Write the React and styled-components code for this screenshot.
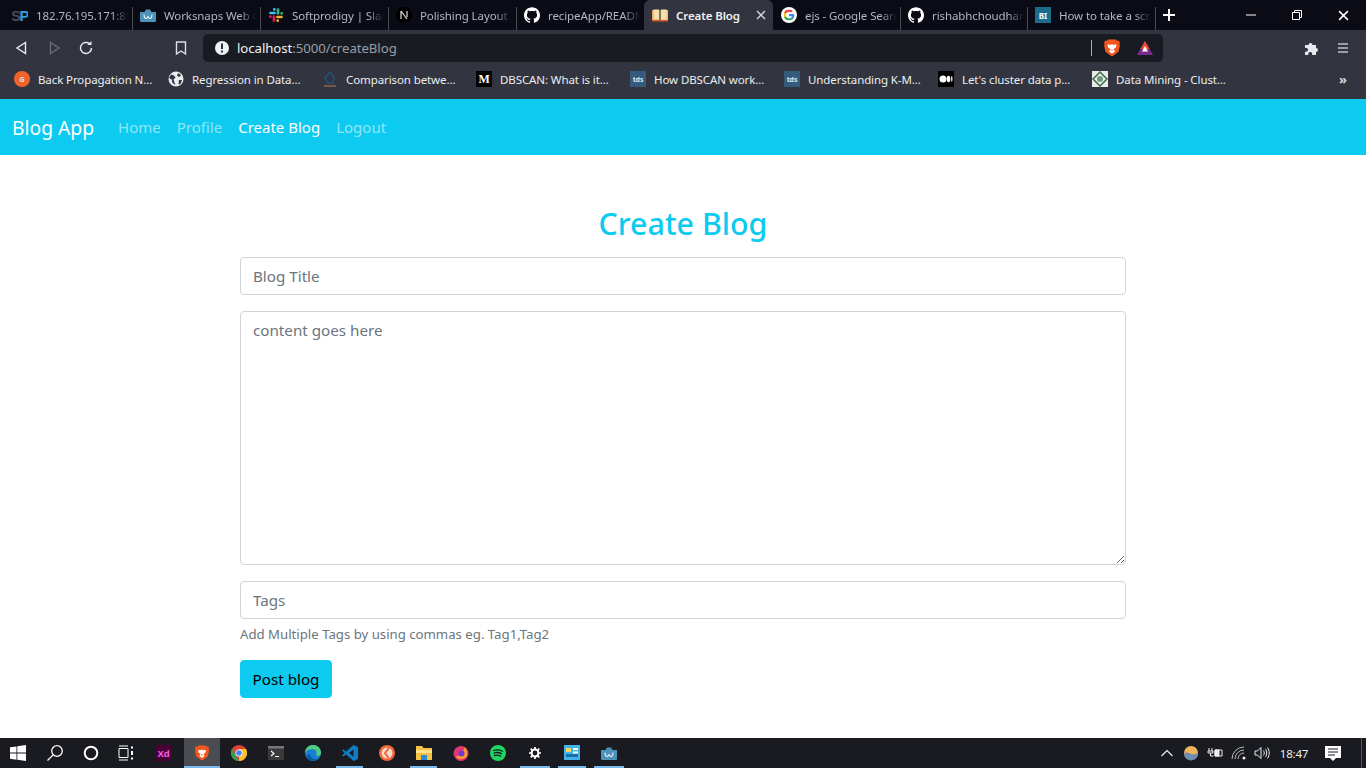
import React from 'react';
import styled, { createGlobalStyle } from 'styled-components';
import { SiGithub } from 'react-icons/si';

const Global = createGlobalStyle`
  html, body { margin: 0; padding: 0; height: 100%; background: #fff; overflow: hidden; }
  body { font-family: "Noto Sans", "Open Sans", "Liberation Sans", sans-serif; }
  * { box-sizing: border-box; }
`;
const Page = styled.div`display:flex;flex-direction:column;height:768px;width:1366px;overflow:hidden;`;
const TabStrip = styled.div`height:30px;background:#0b0b15;display:flex;align-items:stretch;padding-left:4px;flex:none;`;
const Tab = styled.div`
  width:${p => p.$w || 128}px;flex:none;display:flex;align-items:center;padding-left:8px;gap:8px;position:relative;
  background:${p => p.$active ? '#32353f' : 'transparent'};
  border-radius:${p => p.$active ? '6px 6px 0 0' : '0'};
  color:${p => p.$active ? '#f0f1f3' : '#b4b7bf'};
  font-size:11.5px;font-weight:${p => p.$active ? 600 : 400};
  &::after{content:"";display:${p => p.$sep ? 'block' : 'none'};position:absolute;right:-1px;top:7px;bottom:0;width:1px;background:#4a4c55;}
`;
const TabIcon = styled.span`width:16px;height:16px;flex:none;display:flex;align-items:center;justify-content:center;color:#fff;`;
const TabText = styled.span`
  width:${p => p.$w || 92}px;overflow:hidden;white-space:nowrap;flex:none;letter-spacing:-.1px;
  ${p => p.$fade ? 'mask-image:linear-gradient(to right,#000 82%,transparent);' : ''}
`;
const TabClose = styled.span`position:absolute;right:7px;top:10px;width:10px;height:10px;display:flex;`;
const NewTab = styled.div`width:28px;display:flex;align-items:center;justify-content:center;flex:none;`;
const WinControls = styled.div`margin-left:auto;display:flex;align-items:center;`;
const WinBtn = styled.div`width:46px;height:30px;display:flex;align-items:center;justify-content:center;`;

const Toolbar = styled.div`height:36px;background:#32353f;display:flex;align-items:center;padding-left:14px;flex:none;`;
const NavIcon = styled.span`width:16px;height:16px;display:flex;margin-right:16px;flex:none;`;
const BookIcon = styled.span`width:16px;height:16px;display:flex;margin:0 14px 0 63px;flex:none;`;
const Omni = styled.div`width:960px;height:28px;border-radius:5px;background:#191b23;display:flex;align-items:center;padding-left:11px;flex:none;`;
const UrlText = styled.span`margin-left:7px;font-size:13.2px;color:#9a9da6;letter-spacing:-.05px;`;
const UrlHost = styled.span`color:#f1f2f4;`;
const OmniEnd = styled.div`margin-left:auto;display:flex;align-items:center;height:100%;padding-right:9px;`;
const OmniSep = styled.span`width:1px;height:16px;background:#aaa;margin-right:11px;`;
const ExtIcon = styled.span`width:18px;height:18px;display:flex;margin-left:${p => p.$ml || 0}px;`;
const ToolEnd = styled.div`display:flex;align-items:center;margin-left:141px;gap:17px;`;

const Bookmarks = styled.div`height:33px;background:#32353f;display:flex;align-items:center;padding:0 0 7px 14px;flex:none;position:relative;`;
const Bookmark = styled.div`width:154px;flex:none;display:flex;align-items:center;gap:8px;font-size:11.5px;color:#eceef1;white-space:nowrap;letter-spacing:-.1px;`;
const BmIcon = styled.span`width:16px;height:16px;flex:none;display:flex;align-items:center;justify-content:center;font-size:7px;font-weight:700;color:#dfe5ea;border-radius:${p => p.$round ? '50%' : '0'};background:${p => p.$bg || 'transparent'};`;
const More = styled.span`position:absolute;right:19px;top:5px;color:#d5d7db;font-size:13px;font-weight:700;line-height:16px;`;

const Navbar = styled.nav`height:56px;background:#0dcaf0;display:flex;align-items:center;padding:0 12px;flex:none;`;
const Brand = styled.a`font-size:19.3px;color:#fff;margin-right:16px;`;
const NavLink = styled.a`font-size:15px;padding:0 8px;color:${p => p.$active ? '#fff' : 'rgba(255,255,255,.55)'};`;

const Main = styled.main`flex:1;display:flex;flex-direction:column;align-items:center;padding-top:48px;background:#fff;`;
const Form = styled.form`width:886px;display:flex;flex-direction:column;`;
const Title = styled.h1`margin:0 0 12px;font-size:30.4px;line-height:42px;font-weight:500;color:#0dcaf0;text-align:center;`;
const Field = styled.input`
  height:38px;width:100%;border:1px solid #ced4da;border-radius:4px;padding:0 12px;font:inherit;font-size:15.2px;margin-bottom:${p => p.$mb}px;outline:none;
  &::placeholder{color:#6c757d;opacity:1;}
`;
const Area = styled.textarea`
  height:254px;width:100%;border:1px solid #ced4da;border-radius:4px;padding:6px 12px;font:inherit;font-size:15.2px;line-height:24px;margin-bottom:16px;resize:vertical;outline:none;display:block;
  &::placeholder{color:#6c757d;opacity:1;}
`;
const Help = styled.div`font-size:13.2px;line-height:21px;color:#6c757d;margin:5px 0 15px;`;
const Post = styled.button`align-self:flex-start;width:92px;height:38px;border:1px solid #0dcaf0;border-radius:4px;background:#0dcaf0;color:#000;font:inherit;font-size:15.2px;padding:0;`;

const Taskbar = styled.div`height:30px;background:#191b21;display:flex;align-items:center;flex:none;position:relative;`;
const TaskCell = styled.div`
  width:${p => p.$w || 36}px;height:30px;flex:none;display:flex;align-items:center;justify-content:center;position:relative;
  background:${p => p.$active ? '#4a4c52' : 'transparent'};
  &::after{content:"";display:${p => p.$open ? 'block' : 'none'};position:absolute;left:${p => p.$active ? 0 : '4px'};right:${p => p.$active ? 0 : '4px'};bottom:0;height:2px;background:#76b9ed;}
`;
const Tray = styled.div`margin-left:auto;display:flex;align-items:center;height:100%;`;
const TrayItem = styled.span`width:${p => p.$w || 24}px;display:flex;align-items:center;justify-content:center;flex:none;`;
const Clock = styled.span`font-size:11.5px;color:#eee;width:42px;text-align:center;flex:none;letter-spacing:-.2px;`;
const Peek = styled.span`width:1px;height:30px;background:#555;margin-left:10px;margin-right:4px;`;

const W = ({ s = 16 }) => (
  <svg width={s} height={s} viewBox="0 0 16 16"><path d="M0 5h4.500L6 2.500h4L11.500 5H16v9a1 1 0 0 1-1 1H1a1 1 0 0 1-1-1z" fill="#4b93b8"/><path d="M4 7.500c0 5 3.600 5 4 1.500.4 3.500 4 3.500 4-1.500" fill="none" stroke="#e8f2f7" strokeWidth="1.100"/></svg>
);
const SP = () => (<svg width="16" height="16" viewBox="0 0 16 16"><text x="-1" y="14" fontFamily="Liberation Sans" fontWeight="700" fontSize="15" fill="#4a4c52">S</text><text x="7.500" y="14" fontFamily="Liberation Sans" fontWeight="700" fontSize="15" fill="#2d9fdc">P</text></svg>);
const Notion = () => (<svg width="16" height="16" viewBox="0 0 16 16"><circle cx="8" cy="8" r="8" fill="#000"/><path d="M5 4v8M5 4l6 8M11 4v6" stroke="#ddd" strokeWidth="1.200" fill="none"/></svg>);
const Slack = () => (
  <svg width="16" height="16" viewBox="0 0 16 16" fill="none" strokeWidth="2.700" strokeLinecap="round">
    <path d="M2.500 6h4M6.300 2.300v.1" stroke="#36c5f0"/>
    <path d="M10 2.500v4M13.700 6.300h-.1" stroke="#2eb67d"/>
    <path d="M13.500 10h-4M9.700 13.700v-.1" stroke="#ecb22e"/>
    <path d="M6 13.500v-4M2.300 9.700h.1" stroke="#e01e5a"/>
  </svg>
);
const Google = () => (
  <svg width="16" height="16" viewBox="0 0 16 16">
    <circle cx="8" cy="8" r="8" fill="#fff"/>
    <svg x="2.500" y="2.500" width="11" height="11" viewBox="0 0 48 48">
      <path fill="#EA4335" d="M24 9.500c3.540 0 6.710 1.220 9.210 3.600l6.850-6.850C35.900 2.380 30.470 0 24 0 14.620 0 6.510 5.380 2.560 13.220l7.980 6.190C12.430 13.720 17.740 9.500 24 9.500z"/>
      <path fill="#4285F4" d="M46.980 24.550c0-1.570-.15-3.090-.38-4.550H24v9.020h12.940c-.58 2.960-2.260 5.480-4.780 7.180l7.730 6c4.510-4.180 7.090-10.360 7.090-17.650z"/>
      <path fill="#FBBC05" d="M10.530 28.590c-.48-1.450-.76-2.990-.76-4.590s.27-3.140.76-4.590l-7.980-6.190C.92 16.460 0 20.120 0 24c0 3.880.92 7.540 2.560 10.780l7.970-6.190z"/>
      <path fill="#34A853" d="M24 48c6.480 0 11.930-2.130 15.890-5.810l-7.730-6c-2.150 1.450-4.920 2.300-8.160 2.300-6.260 0-11.570-4.220-13.470-9.910l-7.980 6.190C6.510 42.620 14.620 48 24 48z"/>
    </svg>
  </svg>
);
const BookFav = () => (<svg width="16" height="16" viewBox="0 0 16 16"><path d="M0 3h7.500v11H0z" fill="#e8a35c"/><path d="M8.500 3H16v11H8.500z" fill="#f0c070"/><path d="M1.500 2.500h5.500v10H1.500zM9 2.500h5.500v10H9z" fill="#f3dfb0"/><path d="M0 13h16v1.500H0z" fill="#d9562b"/></svg>);
const Close = ({ s = 10, c = '#d8dade' }) => (<svg width={s} height={s} viewBox="0 0 10 10"><path d="M1 1l8 8M9 1l-8 8" stroke={c} strokeWidth="1.400"/></svg>);
const Brave = ({ s = 16 }) => (<svg width={s} height={s} viewBox="0 0 16 18"><path d="M4 .5h8l1 1.300 1.500-.3L16 3.500l-.6 1.800.5 1.500-1.400 6L9.500 16.500 8 17.500l-1.500-1L1.500 12.800.1 6.800l.5-1.500L0 3.500 1.500 1.500 3 1.800z" fill="#f1561f"/><path d="M3.500 5.500L6.500 5.800 8 5.200l1.500.6 3-.3-.8 3.300-2.200 1.200L11 12.500 8 14.500 5 12.500l1.500-2.500-2.200-1.200z" fill="#fff"/><path d="M6.700 10.800h2.600L8 12z" fill="#f1561f"/></svg>);
const BAT = () => (<svg width="18" height="18" viewBox="0 0 18 18"><path d="M9 2l8 14H1z" fill="#7b2a8f"/><path d="M9 2l4.500 8h-9z" fill="#ef4b2c"/><path d="M9 7l3 5.500H6z" fill="#fff"/></svg>);
const Globe = () => (<svg width="16" height="16" viewBox="0 0 16 16"><circle cx="8" cy="8" r="7.500" fill="#e9ebee"/><path d="M3 3.500l3 1 1.500 2-2 2 1 3 1 2.500-3-2-.8-3.500L1 7zM10 2l3 2-1.500 2L9 5zM11 9l3 0-1.500 4-2 .5z" fill="#32353f"/></svg>);

const tabs = [
  { i: <SP />, t: '182.76.195.171:8080' },
  { i: <W />, t: 'Worksnaps Web Client' },
  { i: <Slack />, t: 'Softprodigy | Slack' },
  { i: <Notion />, t: 'Polishing Layout - Notion' },
  { i: <SiGithub size={16} />, t: 'recipeApp/README.md' },
];
const tabsAfter = [
  { i: <Google />, t: 'ejs - Google Search', w: 127 },
  { i: <SiGithub size={16} />, t: 'rishabhchoudhary', w: 127 },
  { i: <BmIcon $bg="#1d6b8a" style={{ color: '#fff', fontSize: 8 }}>BI</BmIcon>, t: 'How to take a screenshot', w: 128 },
];

const marks = [
  { i: <BmIcon $round $bg="#f0642a">G</BmIcon>, t: 'Back Propagation N...' },
  { i: <Globe />, t: 'Regression in Data...' },
  { i: <svg width="16" height="16" viewBox="0 0 16 16"><path d="M8 1L3 7l3 5h5l1-6zM2 15h12" fill="none" stroke="#27507a" strokeWidth="1.500"/><path d="M2 15h12" stroke="#c9682b" strokeWidth="1"/></svg>, t: 'Comparison betwe...' },
  { i: <BmIcon $bg="#000" style={{ color: '#fff', fontSize: 12, fontFamily: 'Liberation Serif' }}>M</BmIcon>, t: 'DBSCAN: What is it...' },
  { i: <BmIcon $bg="#355a7c">tds</BmIcon>, t: 'How DBSCAN work...' },
  { i: <BmIcon $bg="#355a7c">tds</BmIcon>, t: 'Understanding K-M...' },
  { i: <BmIcon $bg="#000"><svg width="14" height="8" viewBox="0 0 14 8"><circle cx="4" cy="4" r="3.500" fill="#fff"/><ellipse cx="9.500" cy="4" rx="1.800" ry="3.300" fill="#fff"/><ellipse cx="12.800" cy="4" rx=".7" ry="3" fill="#fff"/></svg></BmIcon>, t: "Let's cluster data p..." },
  { i: <svg width="16" height="16" viewBox="0 0 16 16"><path d="M0 0h16v16H0z" fill="#e8ece6"/><path d="M8 1l7 7-7 7-7-7z" fill="none" stroke="#3e6a4f" strokeWidth="1.500"/><circle cx="8" cy="8" r="3" fill="#6f9a7a"/></svg>, t: 'Data Mining - Clust...' },
];

const Win = () => (<svg width="16" height="16" viewBox="0 0 16 16" fill="#fff"><path d="M0 2.300l6.500-.9v6.200H0zM7.300 1.300L16 0v7.600H7.300zM0 8.400h6.500v6.300L0 13.800zM7.300 8.400H16V16l-8.700-1.200z"/></svg>);
const Search = () => (<svg width="18" height="18" viewBox="0 0 18 18" fill="none" stroke="#fff" strokeWidth="1.300"><circle cx="11" cy="7" r="5.300"/><path d="M7 11l-5.500 5.500"/></svg>);
const Cortana = () => (<svg width="16" height="16" viewBox="0 0 16 16"><circle cx="8" cy="8" r="6.300" fill="none" stroke="#fff" strokeWidth="2"/></svg>);
const TaskView = () => (<svg width="16" height="16" viewBox="0 0 16 16" fill="none" stroke="#fff" strokeWidth="1"><path d="M1 3.500h9v9H1zM1 1h9M1 15h9"/><path d="M13 1.500h2v2h-2zM13 6h2v4h-2zM13 12.500h2v2h-2z" fill="#fff" stroke="none"/></svg>);
const Xd = () => (<svg width="16" height="16" viewBox="0 0 16 16"><rect width="16" height="16" fill="#470137"/><text x="1.500" y="12" fontSize="9.500" fontFamily="Liberation Sans" fontWeight="700" fill="#ff61f6">Xd</text></svg>);
const Chrome = () => (<svg width="16" height="16" viewBox="0 0 16 16"><circle cx="8" cy="8" r="8" fill="#dc4437"/><path d="M8 16A8 8 0 0 1 1 4l4 7z" fill="#2ea24f"/><path d="M8 16a8 8 0 0 0 7-12H8z" fill="#fbc02d"/><circle cx="8" cy="8" r="3.600" fill="#fff"/><circle cx="8" cy="8" r="2.800" fill="#4285f4"/></svg>);
const Term = () => (<svg width="16" height="16" viewBox="0 0 16 16"><rect y="1" width="16" height="14" fill="#3a3a3a"/><rect y="1" width="16" height="2.500" fill="#777"/><path d="M3 6l3 2.500L3 11M7 11.500h4" stroke="#fff" strokeWidth="1.100" fill="none"/></svg>);
const Edge = () => (<svg width="16" height="16" viewBox="0 0 16 16"><circle cx="8" cy="8" r="8" fill="#1a7fd0"/><path d="M8 0a8 8 0 0 1 8 8c0 3-4 3.500-5 2C13 7 11 4 7 4 4 4 1 6 0 8a8 8 0 0 1 8-8z" fill="#4fd07a"/><path d="M5 9c0 4 4 6 8 5a8 8 0 0 1-10 0C1 12 2 9 5 9z" fill="#0c59a4"/></svg>);
const VSCode = () => (<svg width="16" height="16" viewBox="0 0 16 16"><path d="M11.500 0L16 2v12l-4.500 2L4 9.500 1.500 11.500 0 10.500 2.700 8 0 5.500l1.500-1L4 6.500z" fill="#0f7cc4"/><path d="M11.500 4.500L7 8l4.500 3.500z" fill="#191b21"/></svg>);
const Orange = () => (<svg width="16" height="16" viewBox="0 0 16 16"><circle cx="8" cy="8" r="8" fill="#f0663a"/><circle cx="8" cy="8" r="5.500" fill="#f7d9cb"/><path d="M10 3L6 8l3.500 5" fill="none" stroke="#f0663a" strokeWidth="2"/></svg>);
const Folder = () => (<svg width="16" height="16" viewBox="0 0 16 16"><path d="M0 1h6l1.500 2H16v12H0z" fill="#f5c343"/><path d="M0 5h16v3H0z" fill="#ffe08a"/><path d="M5 10h6v5H5z" fill="#2b8ad8"/></svg>);
const Firefox = () => (<svg width="16" height="16" viewBox="0 0 16 16"><circle cx="8" cy="8.500" r="7.500" fill="#e3356f"/><path d="M3 12c2 3 8 3 11-1 1-3 0-7-3-9 1 3-1 4-2 5 2 1 1 4-1 4S4 10 3 12z" fill="#ff9a2e"/><circle cx="8.500" cy="8.500" r="3" fill="#6f3bd6"/></svg>);
const Spotify = () => (<svg width="16" height="16" viewBox="0 0 16 16"><circle cx="8" cy="8" r="8" fill="#1ed760"/><path d="M3.500 5.500c3-1 6-.8 9 .8M4 8c2.500-.8 5-.6 7.500.7M4.500 10.500c2-.5 4-.4 6 .6" fill="none" stroke="#191b21" strokeWidth="1.300" strokeLinecap="round"/></svg>);
const Gear = () => (<svg width="12" height="12" viewBox="0 0 14 14"><circle cx="7" cy="7" r="4" fill="none" stroke="#fff" strokeWidth="2.400"/><path d="M7 0v3M7 11v3M0 7h3M11 7h3M2 2l2 2M10 10l2 2M2 12l2-2M10 4l2-2" stroke="#fff" strokeWidth="2"/></svg>);
const Panel = () => (<svg width="16" height="16" viewBox="0 0 16 16"><rect width="16" height="15" fill="#43b4e8"/><rect x="2" y="3" width="5" height="4" fill="#f5d76e"/><rect x="9" y="3" width="5" height="2" fill="#fff"/><rect x="9" y="6.500" width="5" height="2" fill="#fff"/><rect x="2" y="9" width="12" height="3" fill="#176ea8"/></svg>);

const apps = [
  { i: <Xd />, w: 40 },
  { i: <Brave />, w: 36, active: true, open: true },
  { i: <Chrome />, w: 38 },
  { i: <Term />, w: 35 },
  { i: <Edge />, w: 39 },
  { i: <VSCode />, w: 35, open: true },
  { i: <Orange />, w: 39 },
  { i: <Folder />, w: 35, open: true },
  { i: <Firefox />, w: 39 },
  { i: <Spotify />, w: 36 },
  { i: <Gear />, w: 38, open: true },
  { i: <Panel />, w: 36, open: true },
  { i: <W />, w: 38, open: true },
];

export default function App() {
  return (
    <Page>
      <Global />
      <TabStrip>
        {tabs.map((t, k) => (
          <Tab key={k} $sep={k < 4}>
            <TabIcon>{t.i}</TabIcon>
            <TabText $fade>{t.t}</TabText>
          </Tab>
        ))}
        <Tab $active $w={129}>
          <TabIcon><BookFav /></TabIcon>
          <TabText $w={76}>Create Blog</TabText>
          <TabClose><Close /></TabClose>
        </Tab>
        {tabsAfter.map((t, k) => (
          <Tab key={k} $w={t.w} $sep>
            <TabIcon>{t.i}</TabIcon>
            <TabText $fade>{t.t}</TabText>
          </Tab>
        ))}
        <NewTab><svg width="12" height="12" viewBox="0 0 12 12"><path d="M6 0v12M0 6h12" stroke="#fff" strokeWidth="2"/></svg></NewTab>
        <WinControls>
          <WinBtn><svg width="10" height="10" viewBox="0 0 10 10"><path d="M0 5h10" stroke="#fff"/></svg></WinBtn>
          <WinBtn><svg width="10" height="10" viewBox="0 0 10 10" fill="none" stroke="#fff"><path d="M.5 2.500h7v7h-7zM2.500 2.500v-2h7v7h-2"/></svg></WinBtn>
          <WinBtn><Close s={11} c="#fff" /></WinBtn>
        </WinControls>
      </TabStrip>
      <Toolbar>
        <NavIcon><svg width="16" height="16" viewBox="0 0 16 16" fill="none" stroke="#e8e9ec" strokeWidth="1.400"><path d="M11.500 2.500v11L3 8z" /></svg></NavIcon>
        <NavIcon><svg width="16" height="16" viewBox="0 0 16 16" fill="none" stroke="#6a6d76" strokeWidth="1.400"><path d="M4.500 2.500v11L13 8z" /></svg></NavIcon>
        <NavIcon><svg width="16" height="16" viewBox="0 0 16 16" fill="none" stroke="#e8e9ec" strokeWidth="1.500"><path d="M13.500 8a5.500 5.500 0 1 1-2-4.300"/><path d="M13.500 1v4h-4z" fill="#e8e9ec" stroke="none"/></svg></NavIcon>
        <BookIcon><svg width="16" height="16" viewBox="0 0 16 16" fill="none" stroke="#dfe0e4" strokeWidth="1.400"><path d="M3.500 2h9v12L8 11l-4.500 3z"/></svg></BookIcon>
        <Omni>
          <svg width="16" height="16" viewBox="0 0 16 16"><circle cx="8" cy="8" r="7" fill="#f1f2f4"/><path d="M8 3.500v5.500M8 10.500v2" stroke="#191b23" strokeWidth="1.800"/></svg>
          <UrlText><UrlHost>localhost</UrlHost>:5000/createBlog</UrlText>
          <OmniEnd>
            <OmniSep />
            <ExtIcon><Brave s={18} /></ExtIcon>
            <ExtIcon $ml={15}><BAT /></ExtIcon>
          </OmniEnd>
        </Omni>
        <ToolEnd>
          <svg width="16" height="16" viewBox="0 0 16 16" fill="#e8e9ec"><path d="M1 5h3.500a2 2 0 1 1 4 0H12v3a2 2 0 1 1 0 4v3H8a2 2 0 1 0-3.500 0H1v-3.500a2 2 0 1 0 0-3.500z"/></svg>
          <svg width="12" height="14" viewBox="0 0 12 14" fill="#9a9da6"><path d="M1 2h10v2H1zM1 6h10v2H1zM1 10h10v2H1z"/></svg>
        </ToolEnd>
      </Toolbar>
      <Bookmarks>
        {marks.map((m, k) => (
          <Bookmark key={k}>{m.i}<span>{m.t}</span></Bookmark>
        ))}
        <More>»</More>
      </Bookmarks>
      <Navbar>
        <Brand>Blog App</Brand>
        <NavLink>Home</NavLink>
        <NavLink>Profile</NavLink>
        <NavLink $active>Create Blog</NavLink>
        <NavLink>Logout</NavLink>
      </Navbar>
      <Main>
        <Form>
          <Title>Create Blog</Title>
          <Field $mb={16} placeholder="Blog Title" />
          <Area placeholder="content goes here" />
          <Field $mb={0} placeholder="Tags" />
          <Help>Add Multiple Tags by using commas eg. Tag1,Tag2</Help>
          <Post type="button">Post blog</Post>
        </Form>
      </Main>
      <Taskbar>
        <TaskCell $w={36}><Win /></TaskCell>
        <TaskCell $w={38}><Search /></TaskCell>
        <TaskCell $w={34}><Cortana /></TaskCell>
        <TaskCell $w={36}><TaskView /></TaskCell>
        {apps.map((a, k) => (
          <TaskCell key={k} $w={a.w} $active={a.active} $open={a.open}>{a.i}</TaskCell>
        ))}
        <Tray>
          <TrayItem $w={24}><svg width="12" height="8" viewBox="0 0 12 8" fill="none" stroke="#eee" strokeWidth="1.200"><path d="M.5 7L6 1.500 11.500 7"/></svg></TrayItem>
          <TrayItem $w={24}><svg width="16" height="16" viewBox="0 0 16 16"><circle cx="8" cy="8" r="7" fill="#f0b35a"/><path d="M1 9c3-3 5-1 7 0s5 0 7-1a7 7 0 0 1-14 1z" fill="#6d8bb0"/></svg></TrayItem>
          <TrayItem $w={24}><svg width="16" height="12" viewBox="0 0 16 12" fill="none" stroke="#eee"><path d="M2 1v3M5 1v3M1 4h5v2H1zM3.500 6v3h3M8 3h7v6H8z"/><path d="M8 3h4v6H8z" fill="#eee"/></svg></TrayItem>
          <TrayItem $w={24}><svg width="16" height="14" viewBox="0 0 16 14" fill="none" stroke="#bbb"><path d="M1 13A12 12 0 0 1 13 1M4 13a9 9 0 0 1 9-9M7 13a6 6 0 0 1 6-6"/><circle cx="13" cy="12" r="1.500" fill="#eee" stroke="none"/></svg></TrayItem>
          <TrayItem $w={22}><svg width="16" height="14" viewBox="0 0 16 14" fill="none" stroke="#eee"><path d="M1 5h2.500L7 1.500v11L3.500 9H1zM9.500 4.500c1 1.500 1 3.500 0 5M11.500 3c1.700 2.500 1.700 5.500 0 8M13.500 1.500c2.300 3.500 2.300 7.500 0 11"/></svg></TrayItem>
          <Clock>18:47</Clock>
          <TrayItem $w={36}><svg width="16" height="16" viewBox="0 0 16 16"><path d="M0 1h16v12h-5l-3 3-3-3H0z" fill="#fff"/><path d="M3 4h10M3 7h10M3 10h7" stroke="#191b21"/></svg></TrayItem>
          <Peek />
        </Tray>
      </Taskbar>
    </Page>
  );
}
